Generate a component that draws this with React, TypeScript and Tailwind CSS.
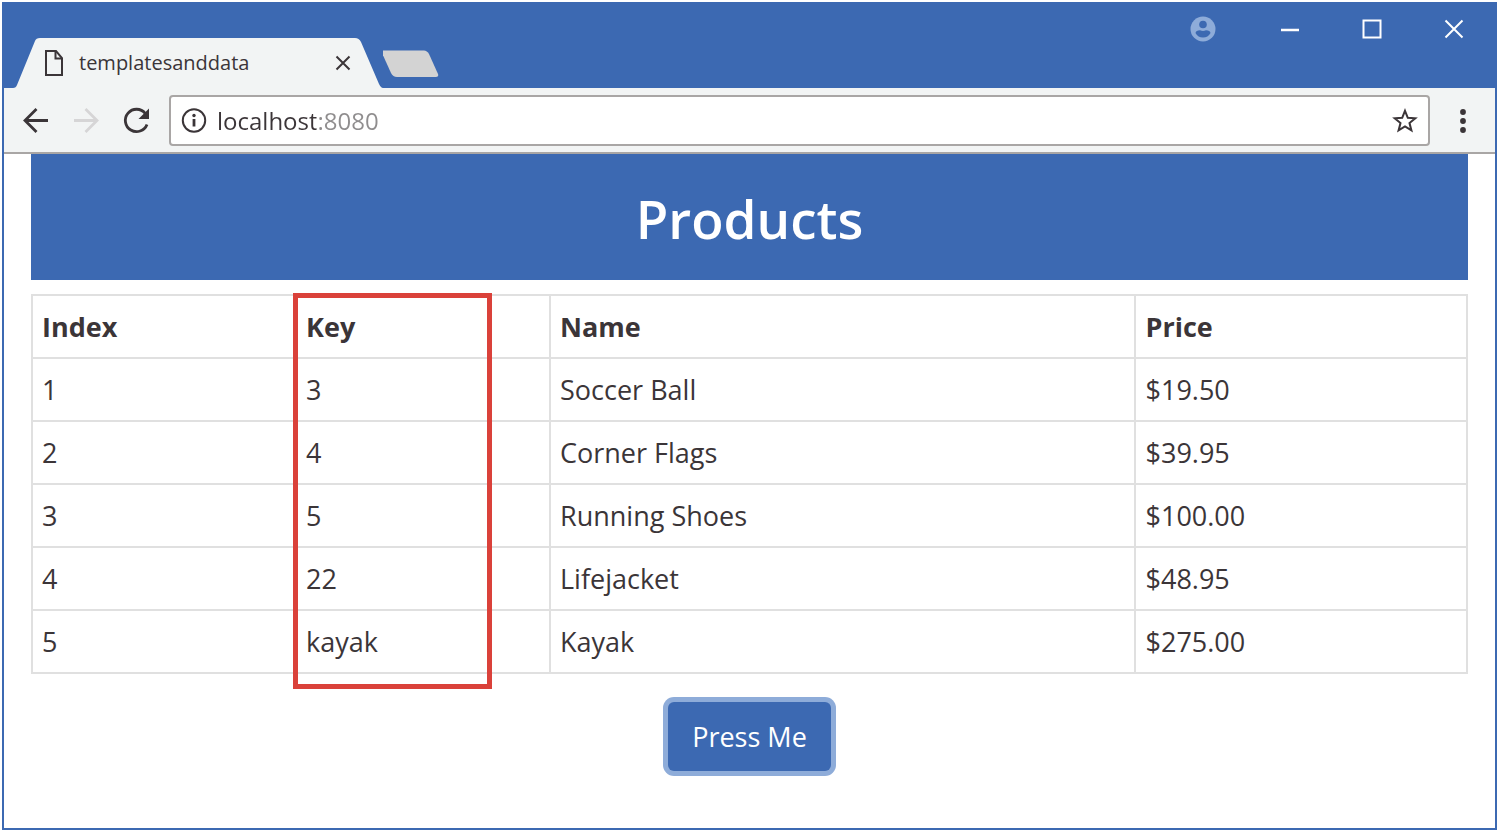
import { useState } from "react";

const products = [
  { key: "3", name: "Soccer Ball", price: 19.5 },
  { key: "4", name: "Corner Flags", price: 39.95 },
  { key: "5", name: "Running Shoes", price: 100 },
  { key: "22", name: "Lifejacket", price: 48.95 },
  { key: "kayak", name: "Kayak", price: 275 },
];

function Tab() {
  return (
    <div className="relative ml-[9px] flex h-[50px] w-[370px] items-center pr-[30px] pl-[32px]">
      <svg className="absolute inset-0" width="370" height="50" viewBox="0 0 370 50" aria-hidden="true">
        <path
          d="M0 50 Q3 50 4 47 L22 3 Q23 0 27 0 H342 Q346 0 348 4 L366 46 Q368 50 370 50 Z"
          fill="#f2f4f4"
        />
      </svg>
      <svg className="relative" width="18" height="26" viewBox="0 0 18 26" fill="none" stroke="#3b3538" strokeWidth="2" aria-hidden="true">
        <path d="M1 1 H11 L17 8 V25 H1 Z" />
        <path d="M10.5 1 V8.5 H17" />
      </svg>
      <span className="relative ml-4 flex-1 text-[20px] leading-7 text-[#3b3538]">templatesanddata</span>
      <button aria-label="Close tab" className="relative flex size-5 items-center justify-center">
        <svg width="16" height="16" viewBox="0 0 16 16" stroke="#3b3538" strokeWidth="2" aria-hidden="true">
          <path d="M1.5 1.5 L14.5 14.5 M14.5 1.5 L1.5 14.5" />
        </svg>
      </button>
    </div>
  );
}

function TitleBar() {
  return (
    <div className="flex h-[84px] items-end bg-[#3c69b2]">
      <Tab />
      <button aria-label="New tab" className="mb-2.5">
        <svg width="56" height="28" viewBox="0 0 56 28" aria-hidden="true">
          <path d="M0 0.5 H41 Q44 0.5 46 4 L55 24 Q56 27 53 27 H14 Q10 27 8 23 L-1 3 Q-2 0.5 0 0.5 Z" fill="#d3d3d3" />
        </svg>
      </button>
      <div className="ml-auto flex h-[50px] self-start text-white">
        <button aria-label="Profile" className="flex w-[92px] items-center justify-center">
          <svg width="26" height="26" viewBox="0 0 26 26" aria-hidden="true">
            <circle cx="13" cy="13" r="12.5" fill="#8eacd9" />
            <circle cx="13" cy="8.5" r="3.8" fill="#3c69b2" />
            <path d="M5.5 17 Q6 14.2 10 14.2 Q13 15.6 16 14.2 Q20 14.2 20.5 17 Q18 21.5 13 21.5 Q8 21.5 5.5 17 Z" fill="#3c69b2" />
          </svg>
        </button>
        <button aria-label="Minimize" className="flex w-[82px] items-center justify-center">
          <svg width="20" height="20" viewBox="0 0 20 20" aria-hidden="true">
            <path d="M1 11 H19" stroke="currentColor" strokeWidth="2.5" />
          </svg>
        </button>
        <button aria-label="Maximize" className="flex w-[82px] items-center justify-center">
          <svg width="20" height="20" viewBox="0 0 20 20" fill="none" aria-hidden="true">
            <rect x="1.5" y="1.5" width="17" height="17" stroke="currentColor" strokeWidth="2" />
          </svg>
        </button>
        <button aria-label="Close" className="flex w-[82px] items-center justify-center">
          <svg width="20" height="20" viewBox="0 0 20 20" aria-hidden="true">
            <path d="M1.5 1.5 L18.5 18.5 M18.5 1.5 L1.5 18.5" stroke="currentColor" strokeWidth="2" />
          </svg>
        </button>
      </div>
    </div>
  );
}

function Toolbar() {
  const [url, setUrl] = useState("localhost:8080");
  return (
    <div className="flex items-center border-b-2 border-[#a9a6a5] bg-[#f2f4f4] pt-[7px] pb-[6px] pl-[7px]">
      <button aria-label="Back" className="flex w-[50px] justify-center">
        <svg width="28" height="28" viewBox="0 0 28 28" fill="none" stroke="#3b3538" strokeWidth="2.8" aria-hidden="true">
          <path d="M26 13.5 H3 M14.5 2 L3 13.5 L14.5 25" />
        </svg>
      </button>
      <button aria-label="Forward" disabled className="flex w-[50px] justify-center">
        <svg width="28" height="28" viewBox="0 0 28 28" fill="none" stroke="#d6d5d6" strokeWidth="2.8" aria-hidden="true">
          <path d="M2 13.5 H25 M13.5 2 L25 13.5 L13.5 25" />
        </svg>
      </button>
      <button aria-label="Reload" className="flex w-[50px] justify-center">
        <svg width="28" height="28" viewBox="0 0 28 28" aria-hidden="true">
          <path d="M25 17.5 A11.2 11.2 0 1 1 23.2 6.3" fill="none" stroke="#3b3538" strokeWidth="2.8" />
          <path d="M27 1.5 V12 H16.5 Z" fill="#3b3538" />
        </svg>
      </button>
      <div className="ml-2 flex h-[51px] flex-1 items-center rounded-[4px] border-2 border-[#a9a6a5] bg-white px-2.5">
        <svg width="26" height="26" viewBox="0 0 26 26" aria-hidden="true">
          <circle cx="13" cy="12.5" r="11.2" fill="none" stroke="#3b3538" strokeWidth="2" />
          <path d="M13 11 V18.5" stroke="#3b3538" strokeWidth="2.8" />
          <circle cx="13" cy="7.5" r="1.7" fill="#3b3538" />
        </svg>
        <input
          aria-label="Address"
          value={url}
          onChange={(e) => setUrl(e.target.value)}
          className="ml-2.5 min-w-0 flex-1 bg-[linear-gradient(to_right,#3b3538_99px,#8f8d8e_99px)] bg-clip-text text-[24px] leading-8 text-transparent caret-black outline-none"
        />
        <button aria-label="Bookmark this page">
          <svg width="26" height="26" viewBox="0 0 26 26" aria-hidden="true">
            <path
              d="M13 2.8 L15.8 9.8 L23.3 10.3 L17.5 15.1 L19.4 22.4 L13 18.4 L6.6 22.4 L8.5 15.1 L2.7 10.3 L10.2 9.8 Z"
              fill="none"
              stroke="#3b3538"
              strokeWidth="2"
            />
          </svg>
        </button>
      </div>
      <button aria-label="Menu" className="flex w-[65px] justify-center">
        <svg width="8" height="26" viewBox="0 0 8 26" fill="#3b3538" aria-hidden="true">
          <circle cx="4" cy="4" r="2.9" />
          <circle cx="4" cy="13" r="2.9" />
          <circle cx="4" cy="22" r="2.9" />
        </svg>
      </button>
    </div>
  );
}

export default function App() {
  return (
    <div className="flex min-h-screen bg-white pt-[2px] pr-[3px] pb-[3px] pl-[2px] font-['Open_Sans','Noto_Sans',sans-serif] text-[#3b3538]">
      <div className="flex flex-1 flex-col border-2 border-[#3c69b2]">
        <TitleBar />
        <Toolbar />
        <main className="px-[27px]">
          <h1 className="bg-[#3c69b2] pt-[33px] pb-[29px] text-center text-[53px] leading-[64px] font-semibold text-white">
            Products
          </h1>
          <div className="relative mt-[14px]">
            <table className="w-full table-fixed border-collapse text-[27px] leading-[39px]">
              <colgroup>
                <col className="w-[18.4%]" />
                <col className="w-[17.7%]" />
                <col className="w-[40.8%]" />
                <col />
              </colgroup>
              <thead>
                <tr>
                  {["Index", "Key", "Name", "Price"].map((label) => (
                    <th key={label} scope="col" className="border-2 border-[#e0e0e0] px-[9px] py-[11px] text-left font-bold">
                      {label}
                    </th>
                  ))}
                </tr>
              </thead>
              <tbody>
                {products.map((p, i) => (
                  <tr key={p.key}>
                    <td className="border-2 border-[#e0e0e0] px-[9px] py-[11px]">{i + 1}</td>
                    <td className="border-2 border-[#e0e0e0] px-[9px] py-[11px]">{p.key}</td>
                    <td className="border-2 border-[#e0e0e0] px-[9px] py-[11px]">{p.name}</td>
                    <td className="border-2 border-[#e0e0e0] px-[9px] py-[11px]">${p.price.toFixed(2)}</td>
                  </tr>
                ))}
              </tbody>
            </table>
            <div className="pointer-events-none absolute -top-px -bottom-[15px] left-[18.2%] w-[13.9%] border-5 border-[#da413a]" />
          </div>
          <div className="mt-7 flex justify-center">
            <button className="rounded-[6px] bg-[#3c69b2] px-6 py-[15px] text-[27px] leading-[39px] text-white ring-5 ring-[#8eacd9]">
              Press Me
            </button>
          </div>
        </main>
      </div>
    </div>
  );
}
